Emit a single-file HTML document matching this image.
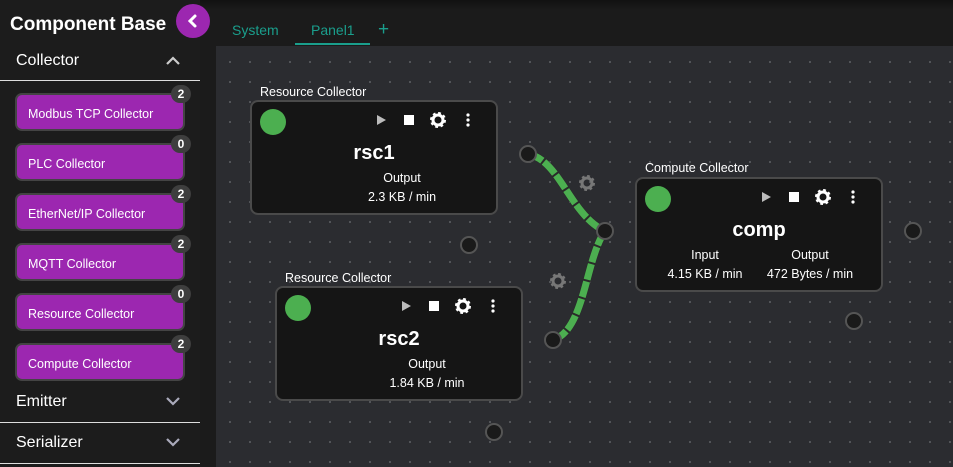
<!DOCTYPE html>
<html><head><style>
*{box-sizing:border-box;margin:0;padding:0}
body{width:953px;height:467px;background:#1b1b1b;font-family:"Liberation Sans",Arial,sans-serif;color:#fff;position:relative;overflow:hidden}
.side{position:absolute;left:0;top:0;width:200px;height:467px;background:#1c1c1c}
.title{position:absolute;left:10px;top:14px;font-size:19px;font-weight:bold}
.back{position:absolute;left:176px;top:4px;width:34px;height:34px;border-radius:50%;background:#9c27b0;z-index:5}
.sec{position:absolute;left:0;width:200px;height:40px;font-size:16px;border-bottom:1.5px solid #ddd}
.sec span{position:absolute;left:16px;top:11px}
.sec svg{position:absolute;right:20px;top:15px}
.item{position:absolute;left:15px;width:170px;height:38px;background:#9c27b0;border:2px solid #444;border-radius:7px;font-size:12.5px;padding:12px 0 0 11px}
.badge{position:absolute;right:-8px;top:-10px;width:20px;height:18px;border-radius:9px;background:#3e3e3e;font-size:12px;font-weight:bold;text-align:center;line-height:18px}
.tabs{position:absolute;left:200px;top:0;width:753px;height:46px;background:linear-gradient(#111 0,#1b1b1b 10px)}
.tab{position:absolute;top:22px;font-size:14px;color:#1a9e8c}
.canvas{position:absolute;left:216px;top:46px;width:737px;height:421px;background-color:#2b2c30;background-image:radial-gradient(circle,#55575c 1px,transparent 1.2px);background-size:20px 20px;background-position:4px 6px}
.node{position:absolute;width:248px;height:115px;background:#151515;border:2px solid #4a4a4a;border-radius:8px}
.lbl{position:absolute;font-size:12.5px}
.dot{position:absolute;left:8px;top:7px;width:26px;height:26px;border-radius:50%;background:#4caf50}
.icons{position:absolute;right:12px;top:10px}
.nm{position:absolute;left:0;width:100%;text-align:center;font-size:20px;font-weight:bold;top:40px}
.st{position:absolute;font-size:12.5px;text-align:center}
.h{position:absolute;width:18px;height:18px;border-radius:50%;background:#1a1a1a;border:2.5px solid #555}
</style></head><body>
<div class="side">
<div class="title">Component Base</div>
<div class="sec" style="top:41px"><span>Collector</span><svg width="14" height="9"><path d="M1 8 L7 2 L13 8" stroke="#ccc" stroke-width="2.2" fill="none"/></svg></div>
<div class="item" style="top:93px">Modbus TCP Collector<div class="badge">2</div></div>
<div class="item" style="top:143px">PLC Collector<div class="badge">0</div></div>
<div class="item" style="top:193px">EtherNet/IP Collector<div class="badge">2</div></div>
<div class="item" style="top:243px">MQTT Collector<div class="badge">2</div></div>
<div class="item" style="top:293px">Resource Collector<div class="badge">0</div></div>
<div class="item" style="top:343px">Compute Collector<div class="badge">2</div></div>
<div class="sec" style="top:382px;height:41px"><span>Emitter</span><svg width="14" height="9"><path d="M1 1 L7 7 L13 1" stroke="#aab" stroke-width="2.2" fill="none"/></svg></div>
<div class="sec" style="top:423px;height:41px"><span>Serializer</span><svg width="14" height="9"><path d="M1 1 L7 7 L13 1" stroke="#aab" stroke-width="2.2" fill="none"/></svg></div>
</div>
<div class="back"><svg width="34" height="34"><path d="M19 12 L14 17 L19 22" stroke="#fff" stroke-width="3" fill="none" stroke-linecap="round"/></svg></div>
<div class="tabs">
<div class="tab" style="left:32px">System</div>
<div class="tab" style="left:111px">Panel1</div>
<div style="position:absolute;left:95px;top:43px;width:75px;height:2px;background:#1a9e8c"></div>
<div class="tab" style="left:178px;top:19px;font-size:19px">+</div>
</div>
<div class="canvas"></div>
<svg style="position:absolute;left:0;top:0" width="953" height="467">
<defs><g id="gear"><circle r="6" fill="none" stroke="currentColor" stroke-width="4" stroke-dasharray="2.4 2.3"/><circle r="5" fill="none" stroke="currentColor" stroke-width="3"/></g></defs>
<path d="M528 154 C560 160,570 215,605 231" stroke="#2a2a2a" stroke-width="8" fill="none"/>
<path d="M528 154 C560 160,570 215,605 231" stroke="#4caf50" stroke-width="7" fill="none" stroke-dasharray="16 2"/>
<path d="M605 231 C585 260,585 330,553 340" stroke="#2a2a2a" stroke-width="8" fill="none"/>
<path d="M605 231 C585 260,585 330,553 340" stroke="#4caf50" stroke-width="7" fill="none" stroke-dasharray="16 2"/>
<use href="#gear" x="587" y="183" style="color:#777"/>
<use href="#gear" x="558" y="281" style="color:#777"/>
</svg>
<div class="h" style="left:519px;top:145px"></div>
<div class="h" style="left:460px;top:236px"></div>
<div class="h" style="left:596px;top:222px"></div>
<div class="h" style="left:544px;top:331px"></div>
<div class="h" style="left:485px;top:423px"></div>
<div class="h" style="left:904px;top:222px"></div>
<div class="h" style="left:845px;top:312px"></div>

<div class="lbl" style="left:260px;top:85px">Resource Collector</div>
<div class="node" style="left:250px;top:100px"><div class="dot"></div>
<svg class="icons" width="110" height="16"><path d="M3 3 L12 8 L3 13Z" fill="#bbb"/><rect x="30" y="3" width="10" height="10" fill="#fff"/><use href="#gear" x="64" y="8" style="color:#fff"/><circle cx="94" cy="3" r="1.6" fill="#fff"/><circle cx="94" cy="8" r="1.6" fill="#fff"/><circle cx="94" cy="13" r="1.6" fill="#fff"/></svg>
<div class="nm">rsc1</div><div class="st" style="left:0;width:100%;padding-left:56px;top:67px;line-height:19px">Output<br>2.3 KB / min</div></div>

<div class="lbl" style="left:285px;top:271px">Resource Collector</div>
<div class="node" style="left:275px;top:286px"><div class="dot"></div>
<svg class="icons" width="110" height="16"><path d="M3 3 L12 8 L3 13Z" fill="#bbb"/><rect x="30" y="3" width="10" height="10" fill="#fff"/><use href="#gear" x="64" y="8" style="color:#fff"/><circle cx="94" cy="3" r="1.6" fill="#fff"/><circle cx="94" cy="8" r="1.6" fill="#fff"/><circle cx="94" cy="13" r="1.6" fill="#fff"/></svg>
<div class="nm">rsc2</div><div class="st" style="left:0;width:100%;padding-left:56px;top:67px;line-height:19px">Output<br>1.84 KB / min</div></div>

<div class="lbl" style="left:645px;top:161px">Compute Collector</div>
<div class="node" style="left:635px;top:177px"><div class="dot"></div>
<svg class="icons" width="110" height="16"><path d="M3 3 L12 8 L3 13Z" fill="#bbb"/><rect x="30" y="3" width="10" height="10" fill="#fff"/><use href="#gear" x="64" y="8" style="color:#fff"/><circle cx="94" cy="3" r="1.6" fill="#fff"/><circle cx="94" cy="8" r="1.6" fill="#fff"/><circle cx="94" cy="13" r="1.6" fill="#fff"/></svg>
<div class="nm">comp</div>
<div class="st" style="left:18px;width:100px;top:67px;line-height:19px">Input<br>4.15 KB / min</div>
<div class="st" style="left:118px;width:110px;top:67px;line-height:19px">Output<br>472 Bytes / min</div></div>
</body></html>
